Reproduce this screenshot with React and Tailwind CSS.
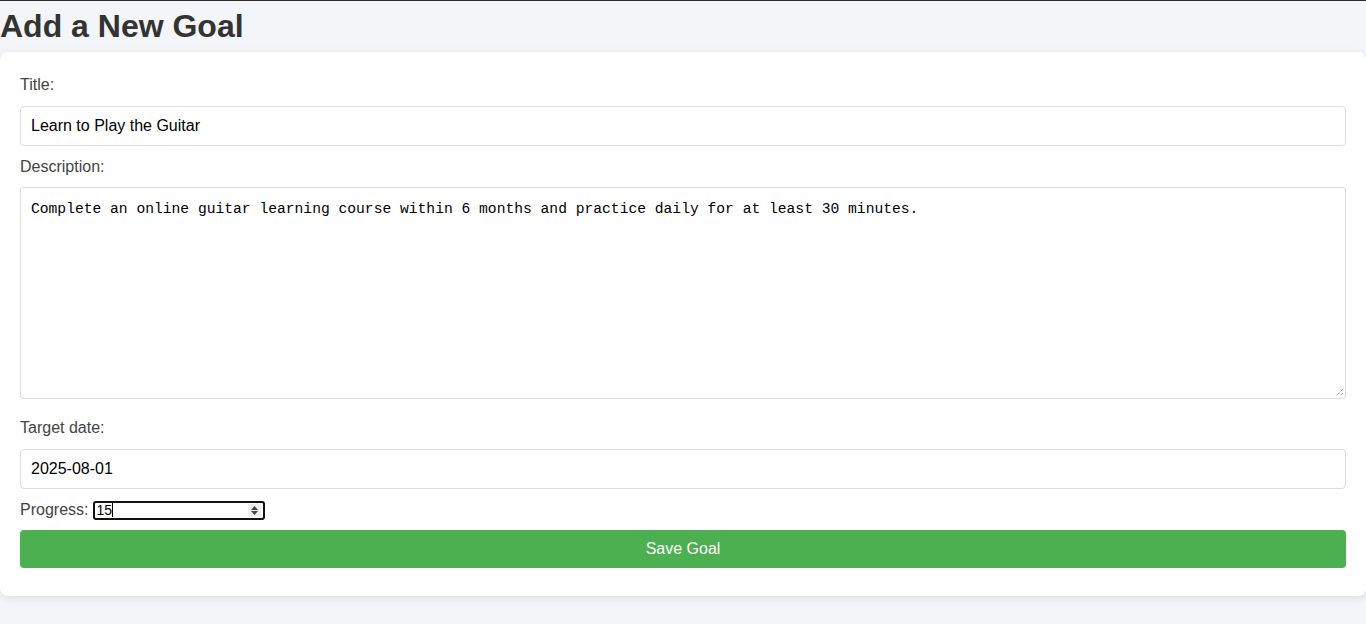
import React from 'react';

export default function App() {
  return (
    <div className="min-h-[624px] bg-[#f4f5f9] border-t border-[#2b2b2b] font-['Liberation_Sans',Arial,sans-serif] text-[#333]">
      {/* Heading */}
      <h1 className="text-[32px] font-bold leading-[37px] mt-[7px] mb-[7px] text-[#333]">Add a New Goal</h1>

      {/* Form card */}
      <div className="bg-white rounded-lg shadow-[0_2px_8px_rgba(0,0,0,0.1)] px-5 pt-5 pb-7">
        <label className="block text-base leading-6 pt-px text-[#444]">Title:</label>
        <div className="mt-[9px] h-10 border border-[#ddd] rounded px-[10px] flex items-center text-base text-black">
          Learn to Play the Guitar
        </div>

        <label className="block text-base leading-6 pt-px text-[#444] mt-2">Description:</label>
        <div className="relative mt-[8px] h-[212px] border border-[#ddd] rounded-[3px] px-[10px] pt-[12px] font-['Liberation_Mono',monospace] text-[14.65px] leading-[18px] text-black">
          Complete an online guitar learning course within 6 months and practice daily for at least 30 minutes.
          <svg className="absolute right-[1px] bottom-[1px]" width="9" height="9" viewBox="0 0 9 9">
            <path d="M8 1 L1 8 M8 5 L5 8" stroke="#777" strokeWidth="1" strokeDasharray="1 1" />
          </svg>
        </div>

        <label className="block text-base leading-6 text-[#444] mt-[17px]">Target date:</label>
        <div className="mt-[9px] h-10 border border-[#ddd] rounded px-[10px] flex items-center text-base text-black">
          2025-08-01
        </div>

        <div className="mt-3 h-[18px] flex items-center">
          <span className="text-base text-[#444] mr-[5px]">Progress:</span>
          <div className="w-[172px] h-[19px] border-2 border-[#111] rounded-[3px] flex items-center pl-[1px] text-[14px] text-black">
            <span className="leading-none">15</span>
            <span className="w-px h-[14px] bg-black" />
            <div className="ml-auto mr-[2px] h-[13px] w-[13px] bg-[#eee] flex flex-col items-center justify-center gap-[1px]">
              <svg width="7" height="4" viewBox="0 0 7 4"><path d="M0 4 L3.5 0 L7 4Z" fill="#444" /></svg>
              <svg width="7" height="4" viewBox="0 0 7 4"><path d="M0 0 L3.5 4 L7 0Z" fill="#444" /></svg>
            </div>
          </div>
        </div>

        <button className="mt-[11px] w-full h-[38px] bg-[#4caf50] text-white text-base rounded flex items-center justify-center">
          Save Goal
        </button>
      </div>
    </div>
  );
}
